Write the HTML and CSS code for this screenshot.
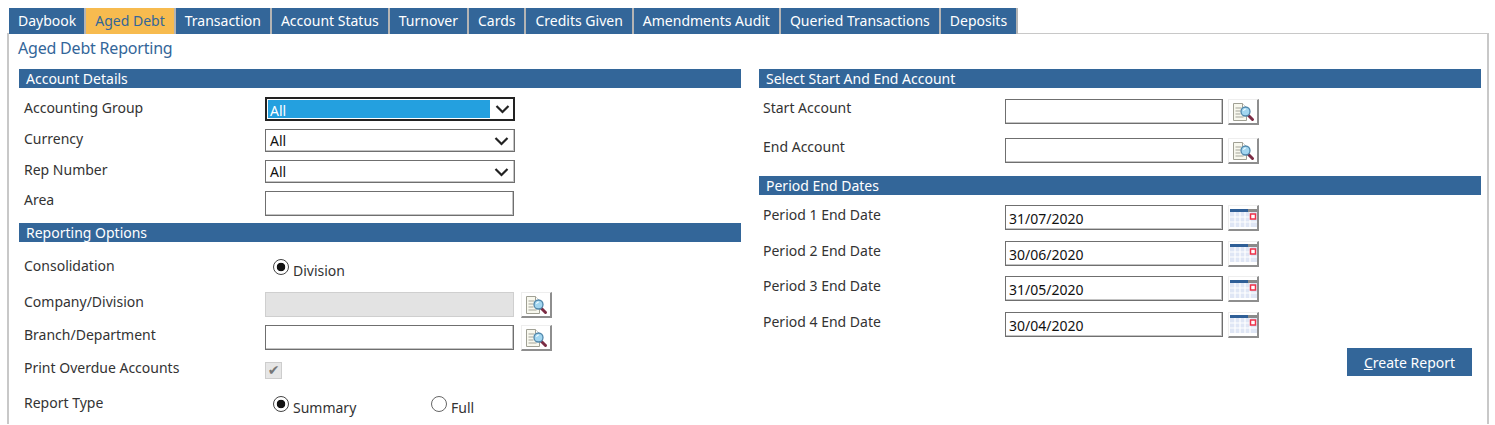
FILE: index.html
```html
<!DOCTYPE html>
<html lang="en">
<head>
    <meta charset="UTF-8">
    <title>Aged Debt Reporting</title>
    <link rel="stylesheet" href="styles.css">
</head>
<body>

<svg class="sprites" width="0" height="0">
    <symbol id="lens" viewBox="0 0 24 20">
        <path d="M2.5 1.5h9l4 4v13h-13z" fill="#f8f8ee" stroke="#a0a094"/>
        <path d="M11.5 1.5v4h4" fill="#fff" stroke="#a0a094"/>
        <path d="M4.5 6h6M4.5 9h5M4.5 12h5M4.5 15h8" stroke="#a5a59a"/>
        <path d="M17.5 13.5l4 4" stroke="#7c2c44" stroke-width="3" stroke-linecap="round"/>
        <circle cx="14.5" cy="9.5" r="4.5" fill="#a2d6f0" stroke="#4f86aa" stroke-width="1.3"/>
        <path d="M12.5 9a2.5 2.5 0 0 1 2.5-2" fill="none" stroke="#eefaff" stroke-width="1.1"/>
    </symbol>
    <symbol id="cal" viewBox="0 0 27 18">
        <rect x="0" y="0" width="18" height="3" fill="#2f5f97"/>
        <rect x="18" y="0" width="9" height="3" fill="#8a8a8a"/>
        <rect x="0" y="3" width="27" height="15" fill="#dfe6f5"/>
        <path d="M5 3v15M10 3v15M15 3v15M20 3v15M0 8h27M0 13h27" stroke="#fff" stroke-width="1.2"/>
        <rect x="20.5" y="5" width="5" height="5" fill="#fff" stroke="#ee3048" stroke-width="1.5"/>
    </symbol>
    <symbol id="chevron" viewBox="0 0 15 10">
        <path d="M1.5 2l6 6 6-6" fill="none" stroke="#222" stroke-width="2.2"/>
    </symbol>
</svg>

<ul class="tabs">
    <li class="first-tab">Daybook</li>
    <li class="active">Aged Debt</li>
    <li>Transaction</li>
    <li>Account Status</li>
    <li>Turnover</li>
    <li>Cards</li>
    <li>Credits Given</li>
    <li>Amendments Audit</li>
    <li>Queried Transactions</li>
    <li>Deposits</li>
</ul>

<div class="panel">
    <h1>Aged Debt Reporting</h1>

    <div class="columns">
        <div class="column">
            <h2>Account Details</h2>
            <div class="row row-select">
                <label>Accounting Group</label>
                <div class="select focused"><span class="value">All</span><svg class="chevron"><use href="#chevron"/></svg></div>
            </div>
            <div class="row row-select">
                <label>Currency</label>
                <div class="select"><span class="value">All</span><svg class="chevron"><use href="#chevron"/></svg></div>
            </div>
            <div class="row row-select">
                <label>Rep Number</label>
                <div class="select"><span class="value">All</span><svg class="chevron"><use href="#chevron"/></svg></div>
            </div>
            <div class="row row-area">
                <label>Area</label>
                <input type="text" class="field">
            </div>

            <h2>Reporting Options</h2>
            <div class="row row-radio first">
                <label>Consolidation</label>
                <div class="radios"><span class="radio on"></span><span class="radio-text">Division</span></div>
            </div>
            <div class="row row-lookup">
                <label>Company/Division</label>
                <input type="text" class="field disabled" disabled>
                <button class="icon-btn"><svg class="lens"><use href="#lens"/></svg></button>
            </div>
            <div class="row row-lookup">
                <label>Branch/Department</label>
                <input type="text" class="field">
                <button class="icon-btn"><svg class="lens"><use href="#lens"/></svg></button>
            </div>
            <div class="row row-check">
                <label>Print Overdue Accounts</label>
                <span class="check">&#10004;</span>
            </div>
            <div class="row row-radio last">
                <label>Report Type</label>
                <div class="radios">
                    <span class="radio on"></span><span class="radio-text summary">Summary</span>
                    <span class="radio"></span><span class="radio-text">Full</span>
                </div>
            </div>
        </div>

        <div class="column right">
            <h2>Select Start And End Account</h2>
            <div class="row row-account">
                <label>Start Account</label>
                <input type="text" class="field wide">
                <button class="icon-btn"><svg class="lens"><use href="#lens"/></svg></button>
            </div>
            <div class="row row-account">
                <label>End Account</label>
                <input type="text" class="field wide">
                <button class="icon-btn"><svg class="lens"><use href="#lens"/></svg></button>
            </div>

            <h2>Period End Dates</h2>
            <div class="row row-date">
                <label>Period 1 End Date</label>
                <input type="text" class="field wide" value="31/07/2020">
                <button class="icon-btn"><svg class="cal"><use href="#cal"/></svg></button>
            </div>
            <div class="row row-date">
                <label>Period 2 End Date</label>
                <input type="text" class="field wide" value="30/06/2020">
                <button class="icon-btn"><svg class="cal"><use href="#cal"/></svg></button>
            </div>
            <div class="row row-date">
                <label>Period 3 End Date</label>
                <input type="text" class="field wide" value="31/05/2020">
                <button class="icon-btn"><svg class="cal"><use href="#cal"/></svg></button>
            </div>
            <div class="row row-date">
                <label>Period 4 End Date</label>
                <input type="text" class="field wide" value="30/04/2020">
                <button class="icon-btn"><svg class="cal"><use href="#cal"/></svg></button>
            </div>

            <div class="actions">
                <button class="create"><u>C</u>reate Report</button>
            </div>
        </div>
    </div>
</div>

</body>
</html>
```

FILE: styles.css
```css
* {
    box-sizing: border-box;
}

html, body {
    height: 425px;
    overflow: hidden;
}

body {
    margin: 0;
    padding: 8px 6px 0 7px;
    background-color: #fff;
    color: #333;
    font-family: 'Noto Sans', sans-serif;
    font-size: 14px;
}

.sprites {
    display: block;
    height: 0;
}

/* Tabs */
.tabs {
    display: flex;
    list-style: none;
    margin: 0;
    padding: 0 0 0 2px;
    height: 26px;
}

.tabs li {
    height: 26px;
    padding: 0 9px;
    line-height: 26px;
    background-color: #336699;
    color: #fff;
    border-right: 2px solid #b4b4b4;
    white-space: nowrap;
}

.tabs li.first-tab {
    padding-right: 8px;
}

.tabs li.active {
    background-color: #f7bb4f;
    color: #336699;
}

/* Panel */
.panel {
    height: 391px;
    margin-top: -1px;
    padding: 0 8px 0 10px;
    border: 2px solid #c8c8c8;
    border-bottom: none;
    border-top-width: 1px;
    overflow: hidden;
}

h1 {
    margin: 0 0 0 -1px;
    height: 35px;
    padding-top: 2px;
    font-size: 16px;
    font-weight: 400;
    line-height: 24px;
    letter-spacing: -0.2px;
    color: #336699;
}

.columns {
    display: grid;
    grid-template-columns: 722px 722px;
    column-gap: 18px;
}

h2 {
    margin: 0;
    height: 19px;
    padding-left: 7px;
    background-color: #336699;
    color: #fff;
    font-size: 14px;
    font-weight: 400;
    line-height: 19px;
}

/* Rows */
.row {
    display: flex;
    align-items: flex-start;
}

.row label {
    flex: none;
    width: 246px;
    padding-left: 5px;
    line-height: 20px;
}

.right .row label {
    padding-left: 4px;
}

.row-select {
    height: 31px;
    padding-top: 10px;
}

.row-area {
    height: 42px;
    padding-top: 10px;
}

.row-area label {
    margin-top: -1px;
}

.row-radio {
    padding-top: 15px;
}

.row-radio label {
    margin-top: -1px;
}

.row-radio.first {
    height: 50px;
}

.row-radio.last {
    padding-top: 13px;
}

.row-radio.last label {
    margin-top: -2px;
}

.row-radio.last .radios {
    margin-top: -4px;
}

.row-lookup {
    height: 33px;
}

.row-check {
    height: 24px;
    padding-top: 4px;
}

.row-check label {
    margin-top: -4px;
}

.row-account {
    height: 39px;
    padding-top: 11px;
}

.row-account + .row-account {
    height: 49px;
}

.row-account label {
    margin-top: -1px;
}

.row-date {
    height: 35.5px;
    padding-top: 10px;
}

/* Fields */
.field {
    display: block;
    width: 249px;
    height: 25px;
    margin: 0;
    padding: 2px 3px 0;
    border: 1px solid #6f6f6f;
    box-shadow: inset -1px -1px 0 #c4c4c4;
    background-color: #fff;
    color: #111;
    font-family: inherit;
    font-size: 14px;
}

.field.wide {
    width: 218px;
}

.field.disabled {
    background-color: #e3e3e3;
    border-color: #cfcfcf;
    box-shadow: none;
}

.select {
    display: flex;
    align-items: center;
    width: 250px;
    height: 23px;
    padding: 0 4px;
    border: 1px solid #6f6f6f;
    box-shadow: inset -1px -1px 0 #c4c4c4;
    color: #111;
}

.select .value {
    flex: 1;
    line-height: 18px;
}

.select.focused {
    height: 24px;
    margin-top: -1px;
    padding: 1px 2px 1px 1px;
    border: 2px solid #222;
    box-shadow: none;
}

.select.focused .value {
    height: 18px;
    margin-right: 5px;
    padding: 2px 0 0 2px;
    background-color: #24a0df;
    color: #fff;
}

.chevron {
    flex: none;
    width: 15px;
    height: 10px;
    margin-right: 1px;
}

/* Icon buttons */
.icon-btn {
    display: flex;
    align-items: center;
    justify-content: center;
    flex: none;
    width: 31px;
    height: 26px;
    margin: 0 0 0 7px;
    padding: 0;
    border: none;
    border-right: 2px solid #8e8e8e;
    border-bottom: 2px solid #8e8e8e;
    border-top: 1px solid #eee;
    border-left: 1px solid #eee;
    background-color: #fff;
}

.wide + .icon-btn {
    margin-left: 5px;
}

.lens {
    width: 24px;
    height: 20px;
}

.cal {
    width: 27px;
    height: 18px;
}

/* Radios and checkbox */
.radios {
    display: flex;
    align-items: center;
    padding-left: 8px;
    margin-top: -3px;
}

.radio {
    flex: none;
    width: 16px;
    height: 16px;
    border: 1px solid #666;
    border-radius: 50%;
    background-color: #fff;
}

.radio.on {
    border-color: #444;
    background: radial-gradient(circle, #111 0 4px, #fff 4.6px);
}

.radio-text {
    margin: 7px 0 0 4px;
    color: #333;
}

.radio-text.summary {
    width: 138px;
}

.check {
    display: block;
    width: 17px;
    height: 17px;
    border: 1px solid #cdcdcd;
    background-color: #e6e6e6;
    color: #777;
    font-family: 'DejaVu Sans', sans-serif;
    font-size: 14px;
    line-height: 15px;
    text-align: center;
}

/* Create button */
.actions {
    display: flex;
    justify-content: flex-end;
    padding: 11px 9px 0 0;
}

.create {
    width: 125px;
    height: 28px;
    padding: 0;
    border: none;
    background-color: #336699;
    color: #fff;
    font-family: inherit;
    font-size: 14px;
}
```
